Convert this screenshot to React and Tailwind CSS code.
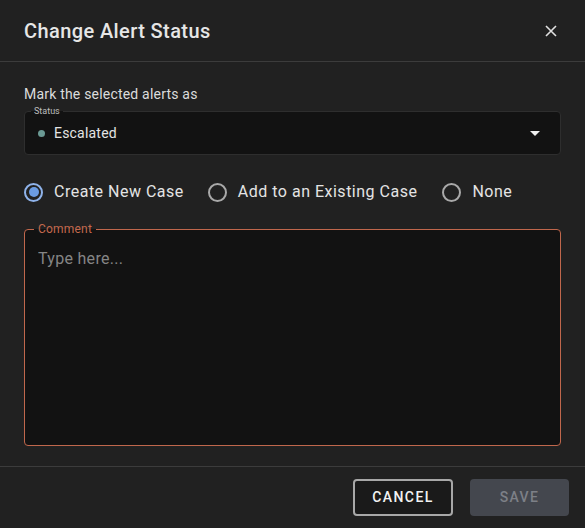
import React, { useState } from 'react';

// Outlined radio, MUI-like
const Radio = ({ checked, label, onClick }) => (
  <button type="button" onClick={onClick} className="flex items-center gap-[11px]">
    <span
      className={`flex h-[19px] w-[19px] items-center justify-center rounded-full border-2 ${
        checked ? 'border-[#8fb3ea]' : 'border-[#a9a9a9]'
      }`}
    >
      {checked && <span className="h-[10px] w-[10px] rounded-full bg-[#6b9ce3]" />}
    </span>
    <span className="text-[16px] tracking-[0.5px] text-[#e4e4e4]">{label}</span>
  </button>
);

export default function App() {
  const [mode, setMode] = useState('new');

  return (
    <div className="h-[528px] w-[585px] bg-[#212121] font-['Roboto',sans-serif] text-[#e4e4e4]">
      <div className="flex h-[62px] items-center justify-between border-b border-[#3c3c3c] pl-6 pr-[28px]">
        <h2 className="text-[20px] font-medium tracking-[0.4px] text-[#e6e6e6]">Change Alert Status</h2>
        <svg width="12" height="12" viewBox="0 0 12 12" className="mt-[1px]">
          <path d="M1 1 L11 11 M11 1 L1 11" stroke="#e0e0e0" strokeWidth="1.6" />
        </svg>
      </div>

      <div className="px-6 pt-[24px]">
        <p className="text-[14px] leading-[16px] tracking-[0.2px] text-[#dcdcdc]">Mark the selected alerts as</p>

        {/* status select, label notched into the outline */}
        <div className="relative mt-[9px] flex h-[44px] items-center justify-between rounded-[4px] border border-[#2e2e2e] bg-[#121212] pl-[13px] pr-[20px]">
          <span className="absolute left-[6px] top-[-6px] bg-[linear-gradient(#212121_50%,#121212_50%)] px-[3px] text-[9px] leading-[10px] text-[#bdbdbd]">
            Status
          </span>
          <div className="flex items-center gap-[9px]">
            <span className="h-[7px] w-[7px] rounded-full bg-[#6b9a94]" />
            <span className="text-[14px] tracking-[0.2px] text-[#e4e4e4]">Escalated</span>
          </div>
          <svg width="10" height="5" viewBox="0 0 10 5">
            <path d="M0 0 H10 L5 5 Z" fill="#f0f0f0" />
          </svg>
        </div>

        <div className="mt-[25px] flex items-center">
          <Radio checked={mode === 'new'} label="Create New Case" onClick={() => setMode('new')} />
          <div className="ml-[24px]">
            <Radio checked={mode === 'existing'} label="Add to an Existing Case" onClick={() => setMode('existing')} />
          </div>
          <div className="ml-[25px]">
            <Radio checked={mode === 'none'} label="None" onClick={() => setMode('none')} />
          </div>
        </div>

        <div className="relative mt-[25px] h-[217px] rounded-[4px] border border-[#c0674c] bg-[#121212] px-[13px]">
          <span className="absolute left-[9px] top-[-8px] bg-[linear-gradient(#212121_50%,#121212_50%)] px-[4px] text-[12px] leading-[14px] tracking-[0.2px] text-[#c4694e]">
            Comment
          </span>
          <textarea
            placeholder="Type here..."
            className="mt-[19px] h-[180px] w-full resize-none bg-transparent text-[16px] leading-[20px] tracking-[0.3px] text-[#e4e4e4] outline-none placeholder:text-[#858585]"
          />
        </div>
      </div>

      <div className="mt-[20px] flex items-center justify-end gap-[17px] border-t border-[#3c3c3c] pr-[16px] pt-[12px]">
        <button className="h-[37px] w-[100px] rounded-[4px] border-2 border-[#a8a8a8] bg-[#1a1a1a] text-[14px] font-medium tracking-[1.4px] text-[#f2f2f2]">
          CANCEL
        </button>
        <button className="h-[37px] w-[99px] rounded-[4px] bg-[#44474e] text-[14px] font-medium tracking-[1.4px] text-[#7d8087]">
          SAVE
        </button>
      </div>
    </div>
  );
}
